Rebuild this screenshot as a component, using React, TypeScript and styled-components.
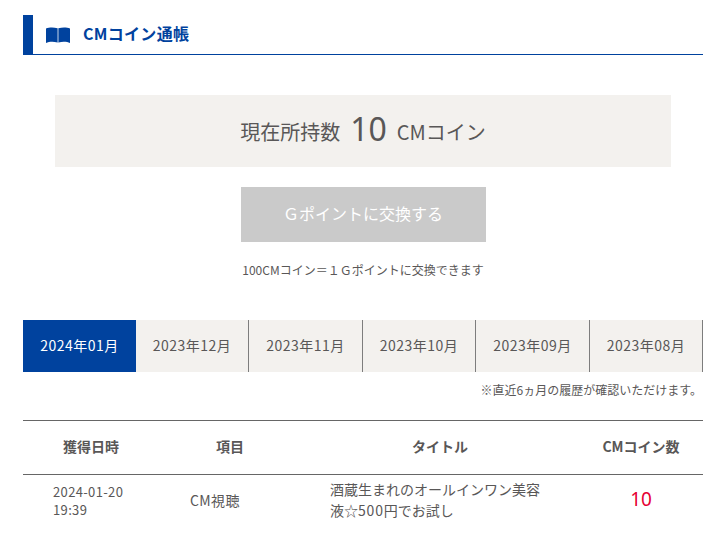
import React from 'react';
import styled, { createGlobalStyle } from 'styled-components';

const GlobalStyle = createGlobalStyle`
  html, body {
    margin: 0;
    padding: 0;
    background: #fff;
    overflow: hidden;
  }
  body {
    font-family: 'Noto Sans CJK JP', 'Noto Sans', sans-serif;
    color: #595757;
  }
`;

const Page = styled.div`
  width: 680px;
  height: 543px;
  padding: 15px 11px 0 23px;
  overflow: hidden;
`;

const Heading = styled.h2`
  display: flex;
  align-items: center;
  height: 35px;
  margin: 0;
  padding: 0 0 4px 13px;
  border-left: 10px solid #00429e;
  border-bottom: 1px solid #00429e;
  color: #00429e;
  font-size: 16px;
  font-weight: 700;
  letter-spacing: 0.3px;
  line-height: 1;
`;

const BookIcon = styled.svg`
  width: 24px;
  height: 16px;
  margin: 5px 13px 0 0;
  fill: #00429e;
`;

const Balance = styled.div`
  display: flex;
  align-items: center;
  justify-content: center;
  height: 72px;
  margin: 40px 32px 0;
  background: #f3f1ee;
  font-size: 20px;
`;

const BalanceValue = styled.span`
  margin: 0 10px 4px;
  font-family: 'Noto Sans', sans-serif;
  font-size: 32px;
  line-height: 1;
`;

const ExchangeButton = styled.button`
  display: block;
  width: 245px;
  height: 55px;
  margin: 20px auto 0;
  padding: 0 0 4px;
  border: 0;
  background: #cacaca;
  color: #fff;
  font-family: inherit;
  font-size: 16px;
`;

const ExchangeNote = styled.p`
  margin: 19px 0 0;
  font-size: 12px;
  line-height: 18px;
  text-align: center;
`;

const Tabs = styled.div`
  display: grid;
  grid-template-columns: 113px 113px 114px 113px 114px 113px;
  height: 52px;
  margin-top: 41px;
  background: #f3f1ee;
`;

const Tab = styled.div<{ $active?: boolean }>`
  display: flex;
  align-items: center;
  justify-content: center;
  padding-bottom: 2px;
  font-size: 14px;
  letter-spacing: 0.5px;
  background: ${props => (props.$active ? '#00429e' : 'transparent')};
  color: ${props => (props.$active ? '#fff' : 'inherit')};
  border-right: ${props => (props.$active ? '0' : '1px solid #7d7d7d')};
`;

const HistoryNote = styled.p`
  margin: 9px 1px 0 0;
  font-size: 12px;
  line-height: 18px;
  text-align: right;
`;

const Row = styled.div`
  display: grid;
  grid-template-columns: 136px 142px 278px 124px;
  align-items: center;
`;

const HeaderRow = styled(Row)`
  height: 53px;
  margin-top: 21px;
  border-top: 1px solid #666;
  border-bottom: 1px solid #666;
`;

const HeaderCell = styled.div`
  padding-bottom: 4px;
  font-size: 14px;
  font-weight: 700;
  text-align: center;
`;

const BodyRow = styled(Row)`
  height: 52px;
`;

const DateCell = styled.div`
  padding-left: 30px;
  font-size: 13px;
  letter-spacing: 0.35px;
  line-height: 18px;
`;

const ItemCell = styled.div`
  padding: 0 0 2px 31px;
  font-size: 14px;
  letter-spacing: 0.4px;
`;

const TitleCell = styled.div`
  padding: 0 0 2px 29px;
  font-size: 14px;
  line-height: 21px;
`;

const Digits = styled.span`
  letter-spacing: 0.8px;
`;

const CoinCell = styled.div`
  padding-bottom: 4px;
  color: #e60033;
  font-family: 'Noto Sans', sans-serif;
  font-size: 19px;
  text-align: center;
`;

const months = [
  '2024年01月',
  '2023年12月',
  '2023年11月',
  '2023年10月',
  '2023年09月',
  '2023年08月'
];

const App: React.FC = () => (
  <Page>
    <GlobalStyle />
    <Heading>
      <BookIcon viewBox="0 0 24 16" aria-hidden="true">
        <path d="M0 1.5C3 .2 7.5 0 11.5 1.2V15.5C7.5 14.3 3 14.5 0 16Z" />
        <path d="M24 1.5C21 .2 16.5 0 12.5 1.2V15.5C16.5 14.3 21 14.5 24 16Z" />
        <rect x="11.5" y="1.2" width="1" height="14.3" opacity="0.45" />
      </BookIcon>
      CMコイン通帳
    </Heading>
    <Balance>
      現在所持数
      <BalanceValue>10</BalanceValue>
      CMコイン
    </Balance>
    <ExchangeButton type="button">Ｇポイントに交換する</ExchangeButton>
    <ExchangeNote>100CMコイン＝１Ｇポイントに交換できます</ExchangeNote>
    <Tabs>
      {months.map((month, index) => (
        <Tab key={month} $active={index === 0}>
          {month}
        </Tab>
      ))}
    </Tabs>
    <HistoryNote>※直近6ヵ月の履歴が確認いただけます。</HistoryNote>
    <HeaderRow>
      <HeaderCell>獲得日時</HeaderCell>
      <HeaderCell>項目</HeaderCell>
      <HeaderCell>タイトル</HeaderCell>
      <HeaderCell>CMコイン数</HeaderCell>
    </HeaderRow>
    <BodyRow>
      <DateCell>
        2024-01-20
        <br />
        19:39
      </DateCell>
      <ItemCell>CM視聴</ItemCell>
      <TitleCell>
        酒蔵生まれのオールインワン美容
        <br />
        液☆<Digits>500</Digits>円でお試し
      </TitleCell>
      <CoinCell>10</CoinCell>
    </BodyRow>
  </Page>
);

export default App;
